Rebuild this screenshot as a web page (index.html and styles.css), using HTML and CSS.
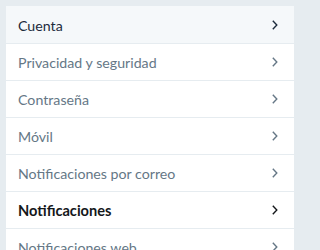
FILE: index.html
```html
<!DOCTYPE html>
<html lang="es">
<head>
<meta charset="utf-8">
<link rel="stylesheet" href="styles.css">
</head>
<body>
<nav class="menu">
  <a class="item active" href="#"><span>Cuenta</span><svg class="chev" viewBox="0 0 6 10"><polyline points="0.8,0.8 4.8,5 0.8,9.2"/></svg></a>
  <a class="item" href="#"><span>Privacidad y seguridad</span><svg class="chev" viewBox="0 0 6 10"><polyline points="0.8,0.8 4.8,5 0.8,9.2"/></svg></a>
  <a class="item" href="#"><span>Contraseña</span><svg class="chev" viewBox="0 0 6 10"><polyline points="0.8,0.8 4.8,5 0.8,9.2"/></svg></a>
  <a class="item" href="#"><span>Móvil</span><svg class="chev" viewBox="0 0 6 10"><polyline points="0.8,0.8 4.8,5 0.8,9.2"/></svg></a>
  <a class="item" href="#"><span>Notificaciones por correo</span><svg class="chev" viewBox="0 0 6 10"><polyline points="0.8,0.8 4.8,5 0.8,9.2"/></svg></a>
  <a class="item bold" href="#"><span>Notificaciones</span><svg class="chev" viewBox="0 0 6 10"><polyline points="0.8,0.8 4.8,5 0.8,9.2"/></svg></a>
  <a class="item" href="#"><span>Notificaciones web</span><svg class="chev" viewBox="0 0 6 10"><polyline points="0.8,0.8 4.8,5 0.8,9.2"/></svg></a>
</nav>
</body>
</html>
```
FILE: styles.css
```css
html, body {
  margin: 0;
  padding: 0;
  background: #e6ecf0;
}
body {
  width: 301px;
  height: 250px;
  overflow: hidden;
  padding: 6px 0 0 6px;
  box-sizing: border-box;
  font-family: Lato, "Liberation Sans", sans-serif;
}
.menu {
  width: 288px;
  display: flex;
  flex-direction: column;
  background: #ffffff;
}
.item {
  display: flex;
  align-items: center;
  justify-content: space-between;
  flex: none;
  height: 36px;
  padding: 0 16px 0 12px;
  border-bottom: 1px solid #e6ecf0;
  color: #657786;
  font-size: 14.2px;
  text-decoration: none;
}
.item span {
  padding-top: 1px;
}
.item.active {
  background: #f5f8fa;
  color: #1c2b3c;
  height: 37px;
}
.item.bold {
  color: #14171a;
  font-weight: bold;
  font-size: 14.6px;
}
.chev {
  width: 6px;
  height: 10px;
  fill: none;
  stroke: currentColor;
  stroke-width: 1.4;
}
```
